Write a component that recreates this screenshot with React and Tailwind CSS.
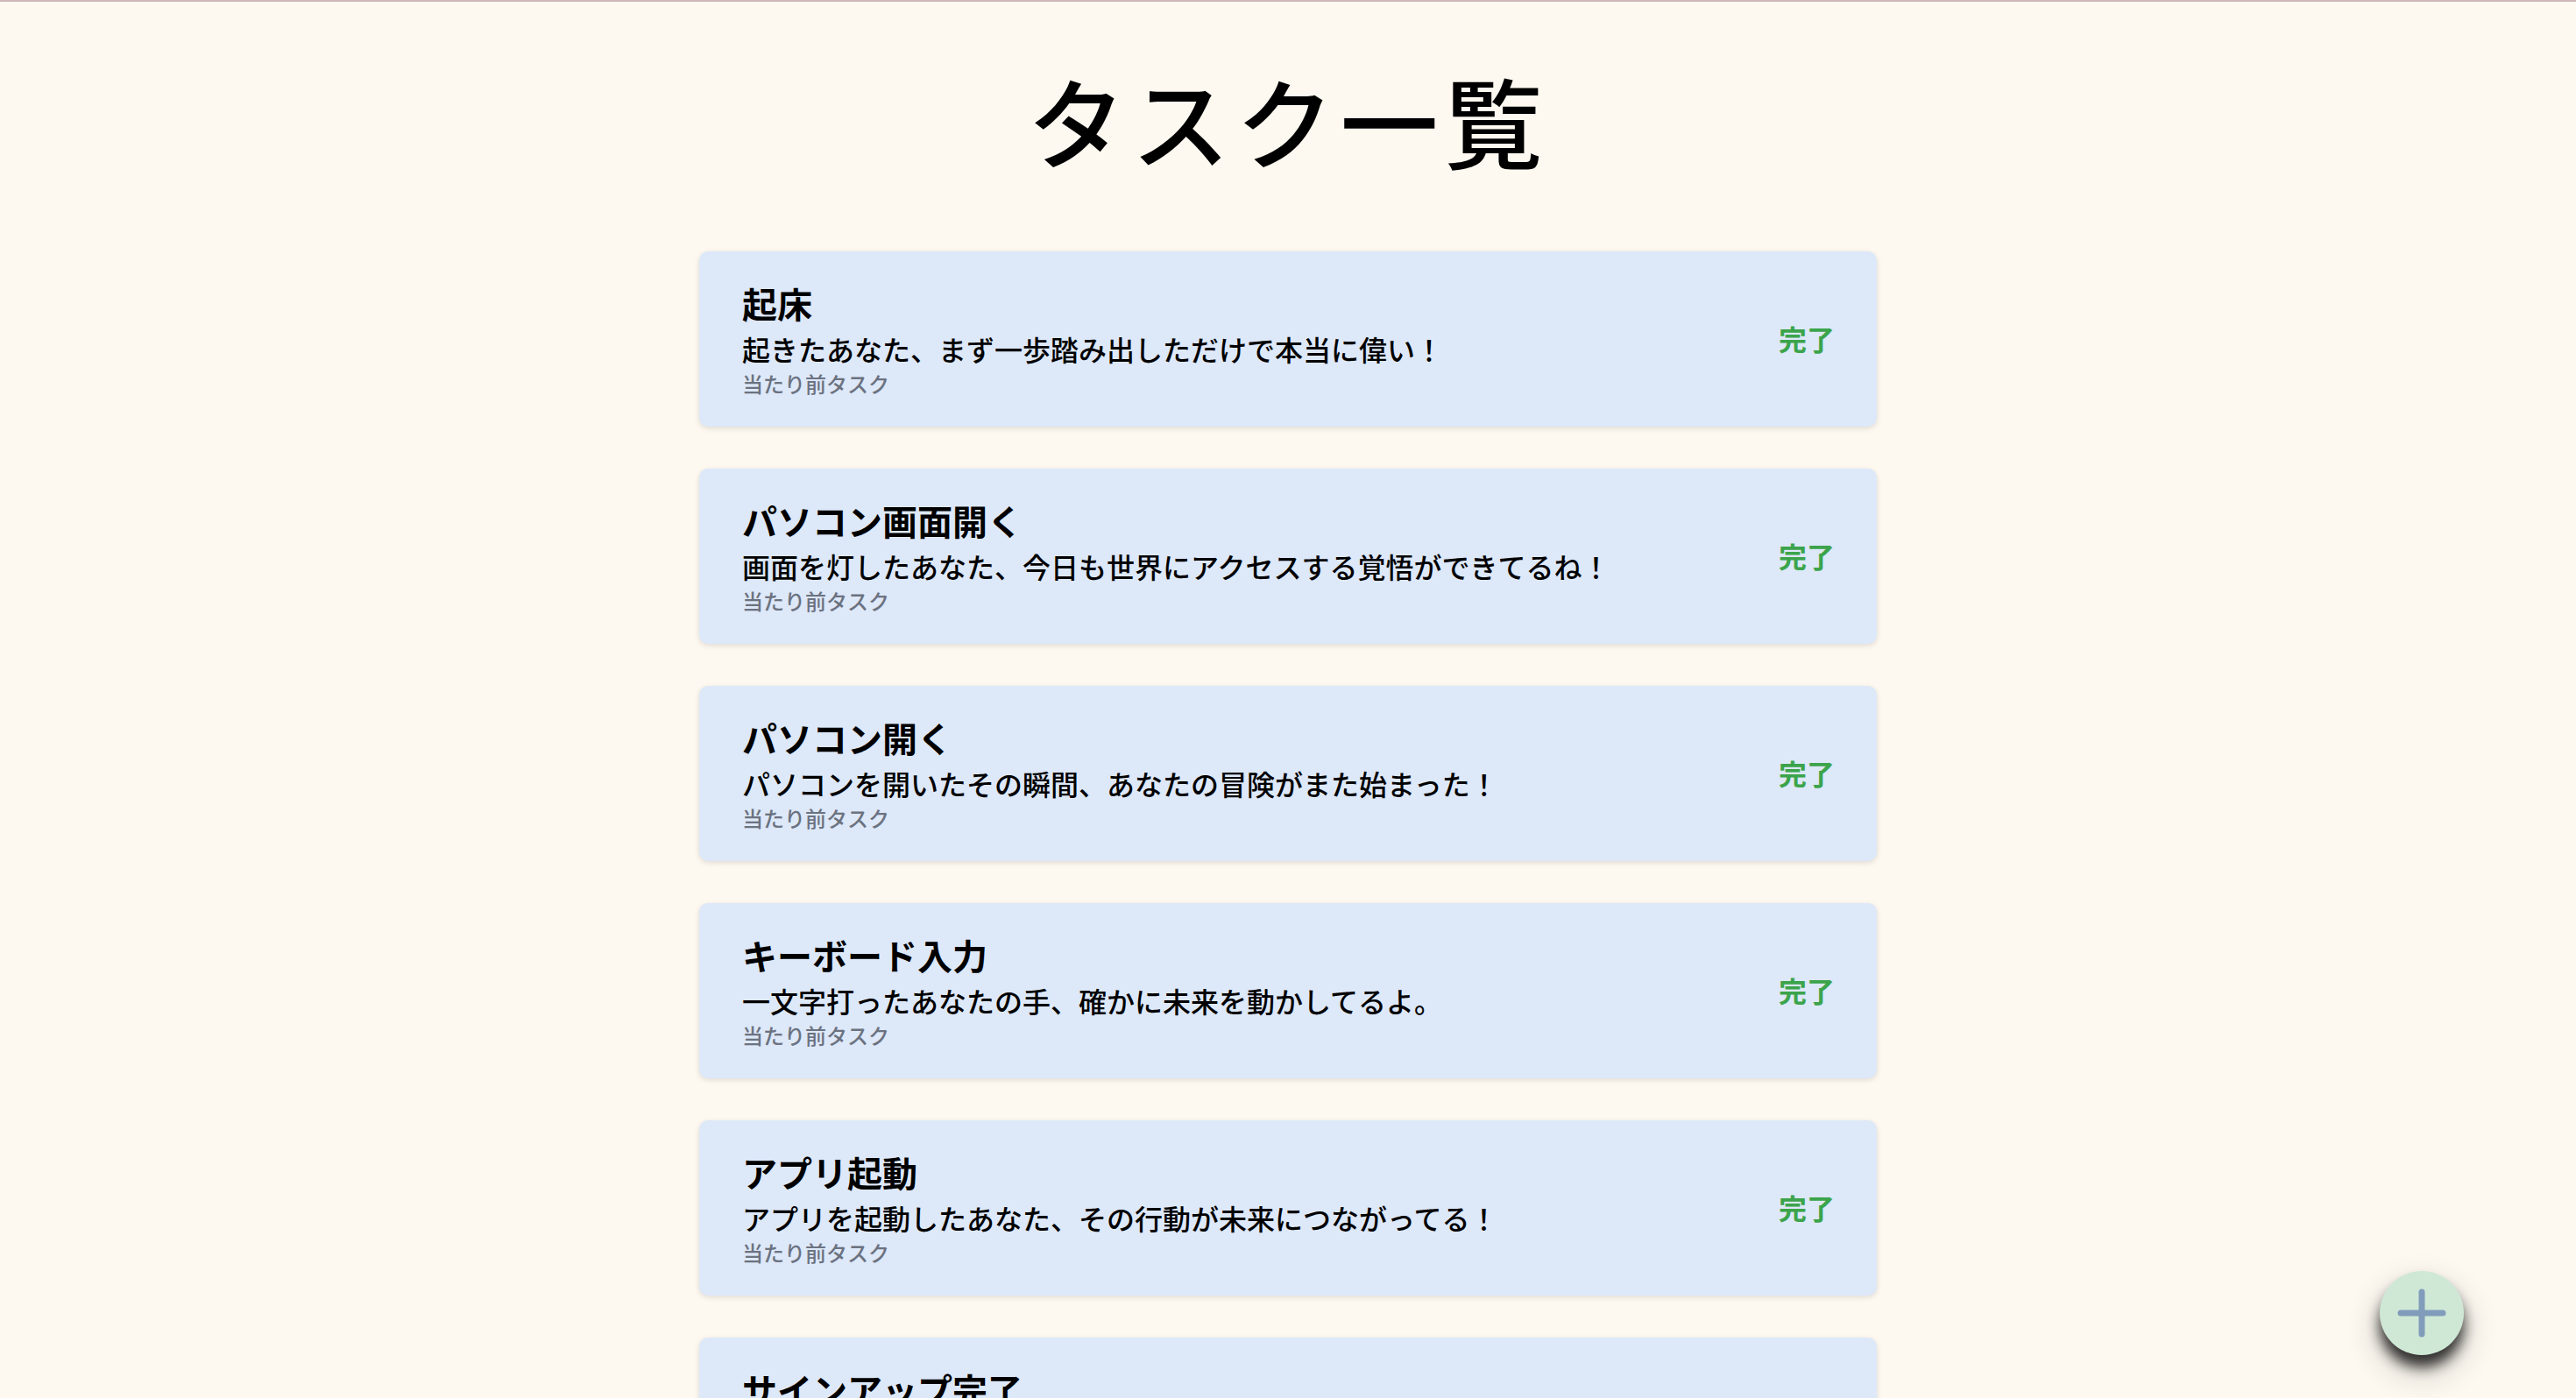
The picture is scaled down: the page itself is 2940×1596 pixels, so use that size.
import React from "react";

const tasks = [
    { title: "起床", message: "起きたあなた、まず一歩踏み出しただけで本当に偉い！" },
    { title: "パソコン画面開く", message: "画面を灯したあなた、今日も世界にアクセスする覚悟ができてるね！" },
    { title: "パソコン開く", message: "パソコンを開いたその瞬間、あなたの冒険がまた始まった！" },
    { title: "キーボード入力", message: "一文字打ったあなたの手、確かに未来を動かしてるよ。" },
    { title: "アプリ起動", message: "アプリを起動したあなた、その行動が未来につながってる！" },
    { title: "サインアップ完了", message: "サインアップを終えたあなた、新しい扉をひらいたね！" },
];

function TaskCard({ task }) {
    return (
        <div className="flex items-center justify-between rounded-[10px] bg-[#dde8f9] pl-[49px] pr-[48px] pt-[31px] pb-[33px] shadow-[0_2px_6px_rgba(0,0,0,0.12)]">
            <div className="flex flex-col">
                <span className="text-[40px] leading-[56px] font-bold text-black">
                    {task.title}
                </span>
                <span className="text-[32px] leading-[48px] font-medium text-black">
                    {task.message}
                </span>
                <span className="text-[24px] leading-[32px] font-medium text-[#6b7280]">
                    当たり前タスク
                </span>
            </div>
            <button className="text-[32px] font-bold text-[#3ba44b]">完了</button>
        </div>
    );
}

export default function App() {
    return (
        <div
            className="min-h-screen bg-[#fdf9f1] border-t-2 border-[#cdb8ba] text-black"
            style={{ fontFamily: '"Noto Sans CJK JP", "Noto Sans", sans-serif' }}
        >
            <h1 className="pt-[78px] text-center text-[112px] leading-[112px] font-medium tracking-[7px]">
                タスク一覧
            </h1>

            <div className="mx-auto mt-[95px] flex w-[1344px] flex-col gap-[48px] pb-[96px]">
                {tasks.map((t) => (
                    <TaskCard key={t.title} task={t} />
                ))}
            </div>

            {/* floating add button */}
            <button className="fixed bottom-[49px] right-[128px] flex h-[96px] w-[96px] items-center justify-center rounded-full bg-[#cfe8d5] shadow-[0_14px_16px_rgba(0,0,0,0.8),0_18px_26px_18px_rgba(0,0,0,0.07)]">
                <svg width="56" height="56" viewBox="0 0 56 56" fill="none">
                    <path
                        d="M28 4v48M4 28h48"
                        stroke="#819cbb"
                        strokeWidth="7"
                        strokeLinecap="round"
                    />
                </svg>
            </button>
        </div>
    );
}
